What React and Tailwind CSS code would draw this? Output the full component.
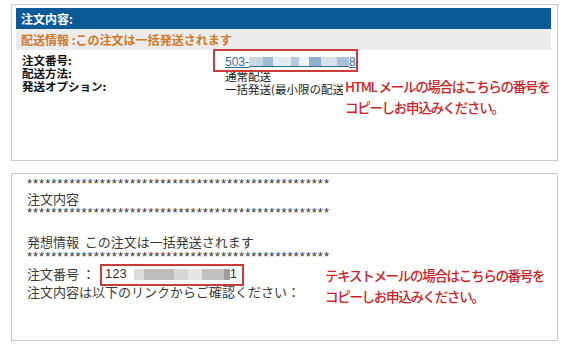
const jp = "font-['Noto_Sans_CJK_JP',sans-serif]";
const stars = "*".repeat(50);

const Stars = () => (
  <div className="font-['Liberation_Sans',sans-serif] tracking-[1px] text-[13px] text-[#333]">{stars}</div>
);

const App = () => {
  return (
    <div className={`w-[567px] h-[347px] bg-white pt-[4px] pl-[11px] pr-[9px] ${jp}`}>
      {/* HTML mail panel */}
      <div className="relative h-[157px] border border-[#c9c9c9] pt-[3px] pl-[4px] pr-[6px]">
        <div className="h-[21px] bg-[#0b5a96] text-white text-[12px] font-bold leading-[21px] pl-[5px]">注文内容:</div>
        <div className="h-[21px] bg-[#ececec] text-[#cf7a26] text-[12px] font-bold leading-[21px] pl-[5px]">
          配送情報 :この注文は一括発送されます
        </div>
        <div className="flex pt-[4px] pl-[6px] text-[12px]">
          <div className="w-[203px] text-[11.5px] leading-[13px] font-bold text-[#111]">
            <div>注文番号:</div>
            <div>配送方法:</div>
            <div>発送オプション:</div>
          </div>
          <div className="text-[#222] text-[11.5px] leading-[13px] whitespace-nowrap">
            <div className="h-[16px] flex items-center text-[12px] text-[#2f6aa8] font-['Liberation_Sans',sans-serif]">
              <span className="underline">503-</span>
              <span className="flex h-[10px] w-[100px] border-b border-[#2f6aa8]">
                <span className="w-[14px] bg-[#c6d8e6]" />
                <span className="w-[10px] bg-[#9fbcd4]" />
                <span className="w-[18px] bg-[#e3ecf3]" />
                <span className="w-[8px] bg-[#b3cadd]" />
                <span className="w-[10px] bg-[#eef3f7]" />
                <span className="w-[12px] bg-[#8fb0cb]" />
                <span className="w-[16px] bg-[#d5e2ec]" />
                <span className="w-[12px] bg-[#a8c2d7]" />
              </span>
              <span className="underline">8</span>
            </div>
            <div>通常配送</div>
            <div>一括発送(最小限の配送:</div>
          </div>
        </div>

        <div className="absolute left-[201px] top-[44px] w-[145px] h-[23px] border-2 border-[#cf3a3a]" />
        <div className="absolute left-[331px] top-[71px] bg-white pl-[2px] text-[13.5px] font-medium tracking-[-1.3px] leading-[21px] text-[#cc2229] whitespace-nowrap">
          <div>HTML メールの場合はこちらの番号を</div>
          <div>コピーしお申込みください。</div>
        </div>
      </div>

      {/* text mail panel */}
      <div className="relative mt-[12px] h-[168px] border border-[#c9c9c9] pt-[3px] pl-[15px] text-[13px] leading-[14.5px] text-[#3a3a3a]">
        <Stars />
        <div>注文内容</div>
        <Stars />
        <div className="h-[14.5px]" />
        <div>発想情報&nbsp; この注文は一括発送されます</div>
        <Stars />
        <div className="h-[21px] flex items-center">
          <span className="w-[73px]">注文番号 ：</span>
          <div className="w-[144px] h-[22px] border-2 border-[#c83c3c] flex items-center pl-[3px] font-['Liberation_Sans',sans-serif] text-[13px] text-[#333]">
            <span>123</span>
            <span className="flex h-[11px] ml-[7px]">
              <span className="w-[10px] bg-[#dcdcdc]" />
              <span className="w-[30px] bg-[#bcbcbc]" />
              <span className="w-[14px] bg-[#d6d6d6]" />
              <span className="w-[14px] bg-[#e6e6e6]" />
              <span className="w-[22px] bg-[#c0c0c0]" />
              <span className="w-[6px] bg-[#9c9c9c]" />
            </span>
            <span>1</span>
          </div>
        </div>
        <div>注文内容は以下のリンクからご確認ください：</div>

        <div className="absolute left-[313px] top-[91px] text-[13.5px] font-medium tracking-[-1.3px] leading-[21px] text-[#cc2229] whitespace-nowrap">
          <div>テキストメールの場合はこちらの番号を</div>
          <div>コピーしお申込みください。</div>
        </div>
      </div>
    </div>
  );
};

export default App;
